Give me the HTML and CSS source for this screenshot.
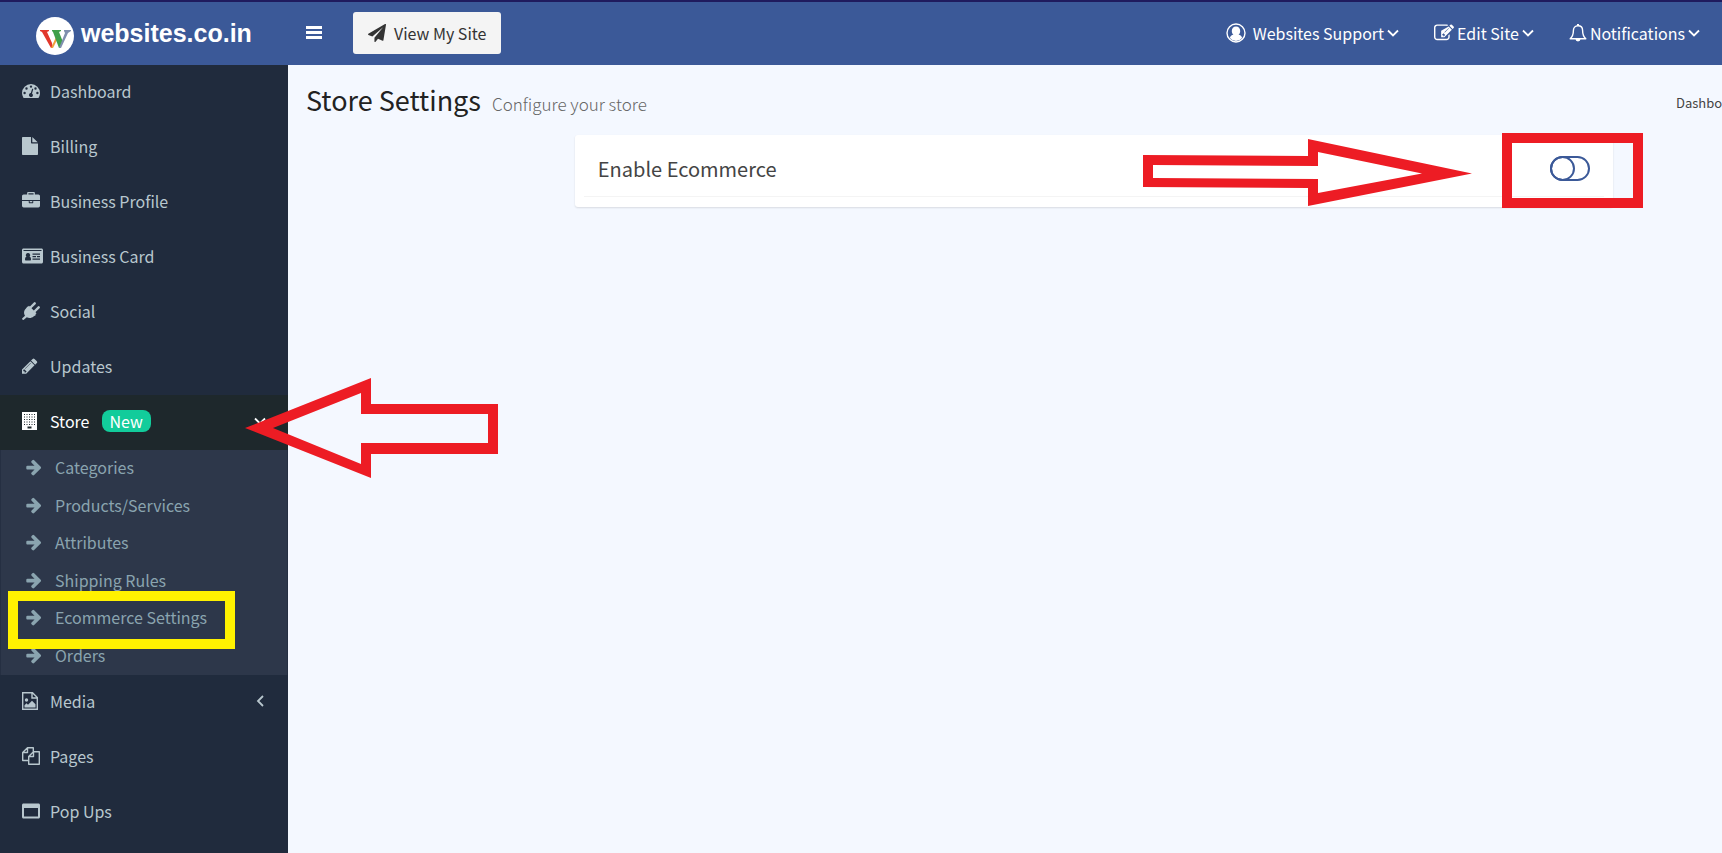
FILE: index.html
```html
<!DOCTYPE html>
<html lang="en">
<head>
    <meta charset="UTF-8">
    <meta name="viewport" content="width=device-width, initial-scale=1.0">
    <title>Store Settings</title>
    <link rel="stylesheet" href="styles.css">
</head>
<body>
    <svg class="sprite" aria-hidden="true">
        <symbol id="arrow" viewBox="0 0 1792 1792"><path d="M1600 960q0 54-37 91l-651 651q-39 37-91 37-51 0-90-37l-75-75q-38-38-38-91t38-91l293-293H245q-52 0-84.5-37.5T128 1024V896q0-53 32.5-90.5T245 768h704L656 474q-38-36-38-90t38-90l75-75q38-38 90-38 53 0 91 38l651 651q37 35 37 90z"/></symbol>
        <symbol id="chevron-down" viewBox="0 0 12 12"><path d="M1 3.500l5 5 5-5" fill="none" stroke="currentColor" stroke-width="1.800"/></symbol>
        <symbol id="chevron-left" viewBox="0 0 12 12"><path d="M9 1L4 6l5 5" fill="none" stroke="currentColor" stroke-width="1.800"/></symbol>
    </svg>

    <header class="header">
        <a class="logo" href="#">
            <svg class="logo-mark" viewBox="0 0 38 38">
                <circle cx="19" cy="19" r="19" fill="#fff"/>
                <path d="M4 13h9v1l-2 1 5 11 1 5h-2L6 15l-2-1z" fill="#e2382c"/>
                <path d="M15 31l5-11 1 3-4 8z" fill="#f0a13c"/>
                <path d="M16 13h9v1l-2 1 4 10-3 6h-1l-6-16-1-1z" fill="#3fa04a"/>
                <path d="M28 13h7v1l-3 2-7 15h-2l6-15-1-2z" fill="#7f8fae"/>
            </svg>
            <span>websites.co.in</span>
        </a>
        <button class="menu-toggle" type="button" aria-label="Toggle menu">
            <svg viewBox="0 0 16 14"><path d="M0 0h16v3H0zM0 5h16v3H0zM0 10h16v3H0z"/></svg>
        </button>
        <a class="view-site" href="#">
            <svg class="icon" viewBox="0 0 1792 1792"><path d="M1764 11q33 24 27 64l-256 1536q-5 29-32 45-14 8-31 8-11 0-24-5l-453-185-242 295q-18 23-49 23-13 0-22-4-19-7-30.5-23.500T640 1728v-349L1504 320 435 1245 40 1083q-37-14-40-55-3-39 32-59L1696 9q15-9 32-9 20 0 36 11z"/></svg>
            View My Site
        </a>
        <nav class="top-nav">
            <a class="user-link" href="#">
                <svg class="icon-large" viewBox="0 0 20 20"><circle cx="10" cy="10" r="9" fill="none" stroke="currentColor" stroke-width="1.400"/><path d="M10 3.500c2.600 0 4.200 1.900 4.200 4.400 0 1.600-.7 3-1.700 3.900 2 .2 3.300 1.500 3.600 3.300A8 8 0 0 1 10 18a8 8 0 0 1-6.100-2.900c.3-1.800 1.600-3.100 3.600-3.300-1-.9-1.700-2.300-1.700-3.900 0-2.500 1.600-4.400 4.200-4.400z"/></svg>
                <span>Websites Support</span>
                <svg class="caret"><use href="#chevron-down"/></svg>
            </a>
            <a href="#">
                <svg class="icon-large" viewBox="0 0 1792 1792"><path d="M888 1184l116-116-152-152-116 116v56h96v96h56zm440-720q-16-16-33 1L945 815q-17 17-1 33t33-1l350-350q17-17 1-33zm80 594v190q0 119-84.500 203.500T1120 1536H288q-119 0-203.500-84.500T0 1248V416q0-119 84.500-203.500T288 128h832q63 0 117 25 15 7 18 23 3 17-9 29l-49 49q-14 14-32 8-23-6-45-6H288q-66 0-113 47t-47 113v832q0 66 47 113t113 47h832q66 0 113-47t47-113v-126q0-13 9-22l64-64q15-15 35-7t20 29zm-96-738l288 288-672 672H640V704zm444 132l-92 92-288-288 92-92q28-28 68-28t68 28l152 152q28 28 28 68t-28 68z"/></svg>
                <span>Edit Site</span>
                <svg class="caret"><use href="#chevron-down"/></svg>
            </a>
            <a href="#">
                <svg class="icon" viewBox="0 0 18 18"><path d="M9 1.800c-3 0-4.600 2-4.600 4.700 0 4-1 6.300-3.200 8.200h15.600c-2.200-1.900-3.200-4.200-3.200-8.200C13.600 3.800 12 1.800 9 1.800z" fill="none" stroke="currentColor" stroke-width="1.400" stroke-linejoin="round"/><path d="M8 0h2v2H8zM6.500 15h5a2.500 2.500 0 0 1-5 0z"/></svg>
                <span>Notifications</span>
                <svg class="caret"><use href="#chevron-down"/></svg>
            </a>
        </nav>
    </header>

    <div class="wrapper">
        <aside class="sidebar">
            <ul class="menu">
                <li><a href="#">
                    <svg class="icon" viewBox="0 0 18 18"><path fill-rule="evenodd" d="M9 2a9 9 0 0 1 9 9c0 1.800-.5 3.400-1.400 4.700-.2.200-.4.300-.7.300H2.100c-.3 0-.5-.1-.7-.3A8.600 8.600 0 0 1 0 11a9 9 0 0 1 9-9zM2.600 9.800a1.200 1.200 0 1 0 0 2.400 1.200 1.200 0 0 0 0-2.400zM4.500 5.300a1.200 1.200 0 1 0 0 2.400 1.200 1.200 0 0 0 0-2.400zM9 3.400a1.200 1.200 0 1 0 0 2.400 1.200 1.200 0 0 0 0-2.400zM13.500 5.300a1.200 1.200 0 1 0 0 2.400 1.200 1.200 0 0 0 0-2.400zM15.400 9.800a1.200 1.200 0 1 0 0 2.400 1.200 1.200 0 0 0 0-2.400zM10 7.200l-1.200 3.900a2 2 0 1 0 1.200.3l1.200-3.900c.2-.8-1-1.100-1.200-.3z"/></svg>
                    Dashboard
                </a></li>
                <li><a href="#">
                    <svg class="icon" viewBox="0 0 18 18"><path d="M1 0h8v5.500c0 .6.400 1 1 1h6V17c0 .6-.4 1-1 1H1c-.6 0-1-.4-1-1V1c0-.6.400-1 1-1zM10.300 0l5.400 5.300h-5.400z"/></svg>
                    Billing
                </a></li>
                <li><a href="#">
                    <svg class="icon" viewBox="0 0 1792 1792"><path d="M640 256h512V128H640v128zm1152 640v480q0 66-47 113t-113 47H160q-66 0-113-47T0 1376V896h672v160q0 26 19 45t45 19h320q26 0 45-19t19-45V896h672zm-768 0v128H768V896h256zm768-480v384H0V416q0-66 47-113t113-47h352V96q0-40 28-68t68-28h576q40 0 68 28t28 68v160h352q66 0 113 47t47 113z"/></svg>
                    Business Profile
                </a></li>
                <li><a href="#">
                    <svg class="icon icon-wide" viewBox="0 0 21 18"><path fill-rule="evenodd" d="M1.500 1.500h18c.8 0 1.500.7 1.500 1.500v12c0 .8-.7 1.500-1.500 1.500h-18C.7 16.500 0 15.800 0 15V3c0-.8.7-1.500 1.500-1.500zM1.500 3v1h18V3zM6 6a2.200 2.200 0 0 0-1.500 3.800C3.500 10 3 11 3 12.500c0 .6.400 1 1 1h4c.6 0 1-.4 1-1 0-1.500-.5-2.500-1.500-2.700A2.200 2.200 0 0 0 6 6zM10.500 6.500v1.300h7.500V6.500zM10.500 9v1.300H14V9zM15 9v1.300h3V9zM10.500 11.500v1.300h7.500v-1.300z"/></svg>
                    Business Card
                </a></li>
                <li><a href="#">
                    <svg class="icon" viewBox="0 0 18 18"><path d="M3.500 7l2-2.500 8.500 8.500-2.500 1.500c-1.800 1.700-4.600 2-6.700.7L1.800 17.800c-.8.800-2.200-.6-1.500-1.500L3 13.800C1.500 11.600 1.800 8.800 3.500 7z"/><path d="M5 5.500l2-1.800 7.500 7.500-2 2z"/><path d="M8 6l4.700-4.700M12 10l4.700-4.700" stroke="currentColor" stroke-width="2.400" stroke-linecap="round"/></svg>
                    Social
                </a></li>
                <li><a href="#">
                    <svg class="icon" viewBox="128 0 1792 1792"><path d="M491 1536l91-91-235-235-91 91v107h128v128h107zm523-928q0-22-22-22-10 0-17 7l-542 542q-7 7-7 17 0 22 22 22 10 0 17-7l542-542q7-7 7-17zm-54-192l416 416-832 832H128v-416zm683 96q0 53-37 90l-166 166-416-416 166-165q36-38 90-38 53 0 91 38l235 234q37 39 37 91z"/></svg>
                    Updates
                </a></li>
                <li class="active">
                    <a href="#">
                        <svg class="icon" viewBox="0 0 18 18"><path fill-rule="evenodd" d="M0 0h15v18H0zM2 2v1h1V2zM4.500 2v1h1V2zM7 2v1h1V2zM9.500 2v1h1V2zM12 2v1h1V2zM2 4.500v1h1v-1zM4.500 4.500v1h1v-1zM7 4.500v1h1v-1zM9.500 4.500v1h1v-1zM12 4.500v1h1v-1zM2 7v1h1V7zM4.500 7v1h1V7zM7 7v1h1V7zM9.500 7v1h1V7zM12 7v1h1V7zM2 9.500v1h1v-1zM4.500 9.500v1h1v-1zM7 9.500v1h1v-1zM9.500 9.500v1h1v-1zM12 9.500v1h1v-1zM2 12v1h1v-1zM4.500 12v1h1v-1zM7 12v1h1v-1zM9.500 12v1h1v-1zM12 12v1h1v-1zM5.500 14.500v2h4v-2z"/></svg>
                        Store <span class="badge">New</span>
                        <svg class="caret"><use href="#chevron-down"/></svg>
                    </a>
                    <svg class="mark store-arrow" viewBox="0 0 253 100" aria-hidden="true"><path fill-rule="evenodd" d="M0 50L126 0v26h127v50H126v24zM28 50l88 36V65h127V36H116V15z"/></svg>
                    <ul class="submenu">
                        <li><a href="#"><svg class="icon"><use href="#arrow"/></svg>Categories</a></li>
                        <li><a href="#"><svg class="icon"><use href="#arrow"/></svg>Products/Services</a></li>
                        <li><a href="#"><svg class="icon"><use href="#arrow"/></svg>Attributes</a></li>
                        <li><a href="#"><svg class="icon"><use href="#arrow"/></svg>Shipping Rules</a></li>
                        <li class="highlighted"><a href="#"><svg class="icon"><use href="#arrow"/></svg>Ecommerce Settings</a></li>
                        <li><a href="#"><svg class="icon"><use href="#arrow"/></svg>Orders</a></li>
                    </ul>
                </li>
                <li><a href="#">
                    <svg class="icon" viewBox="0 0 18 18"><path d="M.7.7h9.800l4.800 4.800v11.800H.7zM10 1v5h5" fill="none" stroke="currentColor" stroke-width="1.400"/><circle cx="4.500" cy="8" r="1.700"/><path d="M2.500 15.500v-2.200l2-2 1.500 1.400 4-4 3.500 3.600v3.200z"/></svg>
                    Media
                    <svg class="caret"><use href="#chevron-left"/></svg>
                </a></li>
                <li><a href="#">
                    <svg class="icon" viewBox="0 0 18 18"><path d="M6.500 13.500H.7v-8L5.500.7h5.800v4.500M.7 5.500h4.800V.7M11.500 4.700h5.800v12.600H6.700v-7.800zM11.500 4.700v4.800H6.700" fill="none" stroke="currentColor" stroke-width="1.400" stroke-linejoin="round"/></svg>
                    Pages
                </a></li>
                <li><a href="#">
                    <svg class="icon" viewBox="0 0 18 18"><path fill-rule="evenodd" d="M1.500 1.500h15c.8 0 1.500.7 1.500 1.500v12c0 .8-.7 1.500-1.500 1.500h-15C.7 16.500 0 15.800 0 15V3c0-.8.7-1.500 1.500-1.500zM2 6v8.500h14V6z"/></svg>
                    Pop Ups
                </a></li>
            </ul>
        </aside>

        <main class="content">
            <div class="content-header">
                <h1>Store Settings</h1>
                <small>Configure your store</small>
                <a class="breadcrumb" href="#">Dashboard</a>
            </div>
            <section class="card">
                <div class="card-row">
                    <label for="enableEcommerce">Enable Ecommerce</label>
                    <span class="switch-cell">
                        <input class="switch" type="checkbox" id="enableEcommerce">
                    </span>
                </div>
                <svg class="mark switch-arrow" viewBox="0 0 329 67" aria-hidden="true"><path fill-rule="evenodd" d="M0 16l165 1V0l164 34.500L165 67V49L0 48zM10 26v13l165 1v14l104-19.500L175 13v14z"/></svg>
                <span class="switch-frame"></span>
            </section>
        </main>
    </div>
</body>
</html>
```
FILE: styles.css
```css
*,
*::before,
*::after {
    box-sizing: border-box;
}
body {
    margin: 0;
    font-family: "Noto Sans CJK SC", "Noto Sans", sans-serif;
    font-size: 16px;
    line-height: 24px;
    color: #333;
    background-color: #f4f8ff;
    overflow-x: hidden;
}
a {
    color: inherit;
    text-decoration: none;
}
ul {
    list-style: none;
    margin: 0;
    padding: 0;
}
svg {
    fill: currentColor;
    flex-shrink: 0;
}
.sprite {
    display: none;
}
.icon {
    width: 18px;
    height: 18px;
}
.icon-large {
    width: 20px;
    height: 20px;
}
.caret {
    width: 12px;
    height: 12px;
}

/* Header */
.header {
    display: flex;
    align-items: center;
    height: 65px;
    padding-bottom: 2px;
    border-top: 2px solid #1f1b5e;
    background-color: #3b5998;
    color: #fff;
}
.logo {
    display: flex;
    align-items: center;
    gap: 7px;
    width: 288px;
    padding-left: 36px;
    font-family: "Liberation Sans", Arial, sans-serif;
    font-size: 25px;
    font-weight: bold;
}
.logo-mark {
    width: 38px;
    height: 38px;
    margin-top: 6px;
}
.menu-toggle {
    display: flex;
    padding: 18px;
    border: none;
    background: none;
    color: inherit;
    cursor: pointer;
}
.menu-toggle svg {
    width: 16px;
    height: 14px;
}
.view-site {
    display: flex;
    align-items: center;
    gap: 8px;
    height: 42px;
    margin-left: 13px;
    padding: 0 15px;
    border-radius: 3px;
    background-color: #f4f4f4;
    color: #333;
}
.top-nav {
    display: flex;
    gap: 35px;
    margin-left: auto;
    padding-right: 22px;
}
.top-nav a {
    display: flex;
    align-items: center;
    gap: 3px;
}
.top-nav .user-link .icon-large {
    margin-right: 4px;
}

/* Sidebar */
.wrapper {
    display: flex;
    min-height: calc(100vh - 65px);
}
.sidebar {
    flex: 0 0 288px;
    background-color: #202b3d;
    color: #b8c7ce;
}
.menu > li {
    position: relative;
}
.menu > li > a {
    display: flex;
    align-items: center;
    height: 55px;
    padding: 0 22px 3px;
}
.menu > li > a .icon {
    margin-right: 10px;
}
.menu > li > a .icon-wide {
    width: 21px;
    margin-right: 7px;
}
.menu .caret {
    margin-left: auto;
}
.menu > .active > a {
    background-color: #1e282c;
    color: #fff;
}
.badge {
    margin-left: 12px;
    padding: 0 8px;
    border-radius: 8px;
    background-color: #12cc9b;
    line-height: 22px;
}
.submenu {
    display: grid;
    grid-auto-rows: 1fr;
    min-height: 225px;
    border: 1px solid #252f42;
    border-width: 0 1px;
    background-color: #2d374a;
    color: #8aa4af;
}
.submenu li {
    position: relative;
}
.submenu a {
    display: flex;
    align-items: center;
    gap: 12px;
    height: 100%;
    padding: 0 0 3px 24px;
}

/* Content */
.content {
    flex: 1;
    min-width: 0;
    overflow: hidden;
}
.content-header {
    display: flex;
    align-items: baseline;
    padding: 15px 0 15px 18px;
    white-space: nowrap;
}
.content-header h1 {
    margin: 0;
    font-size: 27px;
    font-weight: normal;
    line-height: 40px;
    color: #222;
}
.content-header small {
    margin-left: 11px;
    font-size: 17px;
    font-weight: 300;
    color: #666;
}
.breadcrumb {
    align-self: center;
    width: 46px;
    margin-left: auto;
    padding-top: 6px;
    font-size: 13px;
    color: #444;
}
.card {
    position: relative;
    margin: 0 109px 0 20%;
    padding: 0 9px 10px;
    border-radius: 3px;
    background-color: #fff;
    box-shadow: 0 1px 2px rgba(0, 0, 0, 0.12);
}
.card-row {
    display: flex;
    align-items: center;
    justify-content: space-between;
    height: 62px;
    padding: 6px 14px 0;
    border-bottom: 1px solid #f4f4f4;
    font-size: 20px;
    color: #444;
}
.switch-cell {
    display: flex;
    padding-bottom: 1px;
}
.switch {
    appearance: none;
    width: 40px;
    height: 25px;
    margin: 0;
    border: 2px solid #3b5998;
    border-radius: 13px;
    cursor: pointer;
}
.switch::before {
    content: "";
    display: block;
    width: 25px;
    height: 25px;
    margin: -2px;
    border: 2px solid #3b5998;
    border-radius: 50%;
}
.switch:checked::before {
    margin-left: 13px;
}

/* Callouts drawn over the page */
.mark {
    position: absolute;
    z-index: 2;
    fill: #ed1c24;
    pointer-events: none;
}
.store-arrow {
    top: -17px;
    left: 245px;
    width: 253px;
    height: 100px;
}
.switch-arrow {
    top: 4px;
    right: 141px;
    width: 329px;
    height: 67px;
}
.switch-frame {
    position: absolute;
    top: -2px;
    right: -30px;
    width: 141px;
    height: 75px;
    border: 10px solid #ed1c24;
    pointer-events: none;
}
.highlighted::after {
    content: "";
    position: absolute;
    z-index: 1;
    top: -9px;
    left: 7px;
    width: 227px;
    height: 58px;
    border: 10px solid #fff200;
    pointer-events: none;
}
```
